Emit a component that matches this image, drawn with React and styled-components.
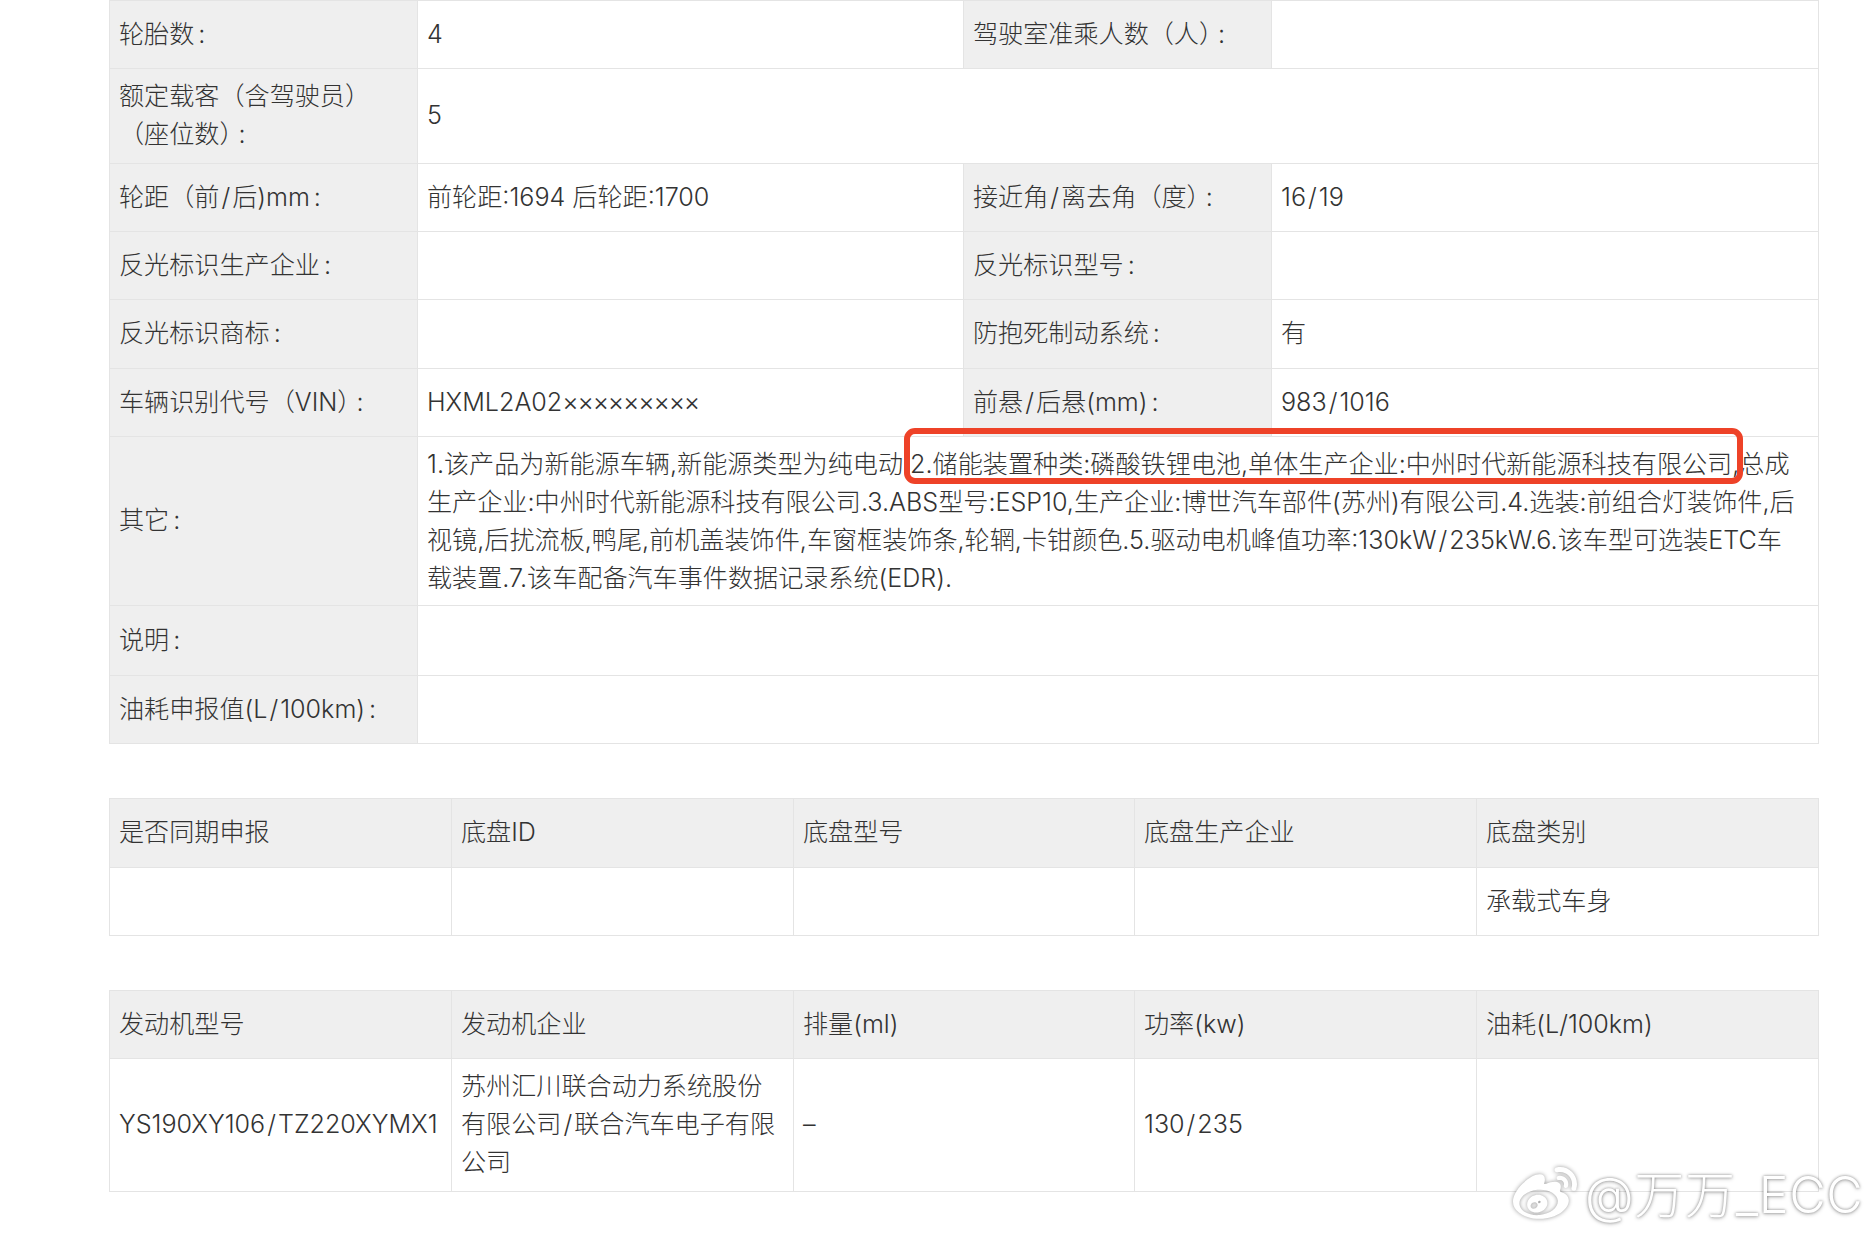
import React from "react";
import styled, { createGlobalStyle } from "styled-components";
import { FaWeibo } from "react-icons/fa";

const Global = createGlobalStyle`
  html, body { margin: 0; padding: 0; background: #fff; }
  body { font-family: Inter, "Noto Sans CJK SC", sans-serif; font-weight: 300; color: #333; }
`;
const Page = styled.div`
  position: relative;
  width: 1876px;
  height: 1242px;
  overflow: hidden;
  padding: 0 58px 0 109px;
  box-sizing: border-box;
`;
const Table = styled.table`
  width: 1709px;
  table-layout: fixed;
  border-collapse: collapse;
  margin-bottom: ${(p) => p.$gap || 0}px;
  font-size: 25.12px;
  line-height: 38px;
`;
const Cell = styled.td`
  border: 1px solid #e4e4e4;
  padding: ${(p) => (p.$long ? "0 14px 0 9px" : "0 9px 2px")};
  height: ${(p) => p.$h || 68}px;
  box-sizing: border-box;
  vertical-align: middle;
  background: ${(p) => (p.$label ? "#efefef" : "#fff")};
  word-break: break-all;
`;
const Slash = styled.span`
  margin: 0 2px;
`;
const Colon = styled.span`
  margin-left: ${(p) => (p.$tight ? -6 : 4)}px;
`;
const Mask = styled.span`
  letter-spacing: -1.2px;
`;
const Highlight = styled.div`
  position: absolute;
  left: 904px;
  top: 428px;
  width: 839px;
  height: 56px;
  box-sizing: border-box;
  border: 6px solid #ee4228;
  border-radius: 11px;
`;
const Watermark = styled.div`
  position: absolute;
  left: 1513px;
  top: 1163px;
  display: flex;
  align-items: center;
  gap: 8px;
  color: #fff;
  font-size: 50px;
  line-height: 54px;
  font-weight: 300;
  letter-spacing: 0.7px;
  text-shadow: 0 0 3px rgba(0,0,0,.4), 0 1px 4px rgba(0,0,0,.25);
  svg { filter: drop-shadow(0 0 2px rgba(0,0,0,.4)); }
`;

function Text({ children, label }) {
  if (typeof children !== "string") return children;
  let body = children;
  let colon = null;
  if (label && body.endsWith(":")) {
    body = body.slice(0, -1);
    colon = <Colon $tight={body.endsWith("）")}>:</Colon>;
  }
  const parts = body.split("/");
  return (
    <>
      {parts.map((p, i) => (
        <React.Fragment key={i}>
          {i > 0 && <Slash>/</Slash>}
          {p}
        </React.Fragment>
      ))}
      {colon}
    </>
  );
}

const spec = [
  [["轮胎数:", "4", "驾驶室准乘人数（人）:", ""], 68],
  [[<>额定载客（含驾驶员）<br />（座位数）<Colon $tight>:</Colon></>, "5"], 95],
  [["轮距（前/后)mm:", "前轮距:1694 后轮距:1700", "接近角/离去角（度）:", "16/19"], 68],
  [["反光标识生产企业:", "", "反光标识型号:", ""], 68],
  [["反光标识商标:", "", "防抱死制动系统:", "有"], 69],
  [["车辆识别代号（VIN）:", <>HXML2A02<Mask>×××××××××</Mask></>, "前悬/后悬(mm):", "983/1016"], 68],
  [["其它:", "1.该产品为新能源车辆,新能源类型为纯电动 2.储能装置种类:磷酸铁锂电池,单体生产企业:中州时代新能源科技有限公司,总成生产企业:中州时代新能源科技有限公司.3.ABS型号:ESP10,生产企业:博世汽车部件(苏州)有限公司.4.选装:前组合灯装饰件,后视镜,后扰流板,鸭尾,前机盖装饰件,车窗框装饰条,轮辋,卡钳颜色.5.驱动电机峰值功率:130kW/235kW.6.该车型可选装ETC车载装置.7.该车配备汽车事件数据记录系统(EDR)."], 169, true],
  [["说明:", ""], 70],
  [["油耗申报值(L/100km):", ""], 68],
];

function SpecTable() {
  return (
    <Table $gap={54}>
      <colgroup><col width="308" /><col width="546" /><col width="308" /><col width="547" /></colgroup>
      <tbody>
        {spec.map(([cells, h, long], r) => (
          <tr key={r}>
            {cells.map((c, i) => (
              <Cell key={i} $h={h} $long={long && i === 1} $label={i % 2 === 0} colSpan={cells.length === 2 && i === 1 ? 3 : 1}>
                <Text label={i % 2 === 0}>{c}</Text>
              </Cell>
            ))}
          </tr>
        ))}
      </tbody>
    </Table>
  );
}
function DataTable({ head, row, gap, headH, rowH }) {
  return (
    <Table $gap={gap}>
      <colgroup><col width="342" /><col width="342" /><col width="341" /><col width="342" /><col width="342" /></colgroup>
      <tbody>
        <tr>{head.map((c) => <Cell key={c} $label $h={headH}>{c}</Cell>)}</tr>
        <tr>{row.map((c, i) => <Cell key={i} $h={rowH}><Text>{c}</Text></Cell>)}</tr>
      </tbody>
    </Table>
  );
}
export default function App() {
  return (
    <Page>
      <Global />
      <SpecTable />
      <DataTable gap={54} headH={69} rowH={68} head={["是否同期申报", "底盘ID", "底盘型号", "底盘生产企业", "底盘类别"]} row={["", "", "", "", "承载式车身"]} />
      <DataTable headH={68} rowH={133} head={["发动机型号", "发动机企业", "排量(ml)", "功率(kw)", "油耗(L/100km)"]} row={["YS190XY106/TZ220XYMX1", "苏州汇川联合动力系统股份有限公司/联合汽车电子有限公司", "–", "130/235", ""]} />
      <Highlight />
      <Watermark><FaWeibo size={64} /><span>@万万_ECC</span></Watermark>
    </Page>
  );
}
